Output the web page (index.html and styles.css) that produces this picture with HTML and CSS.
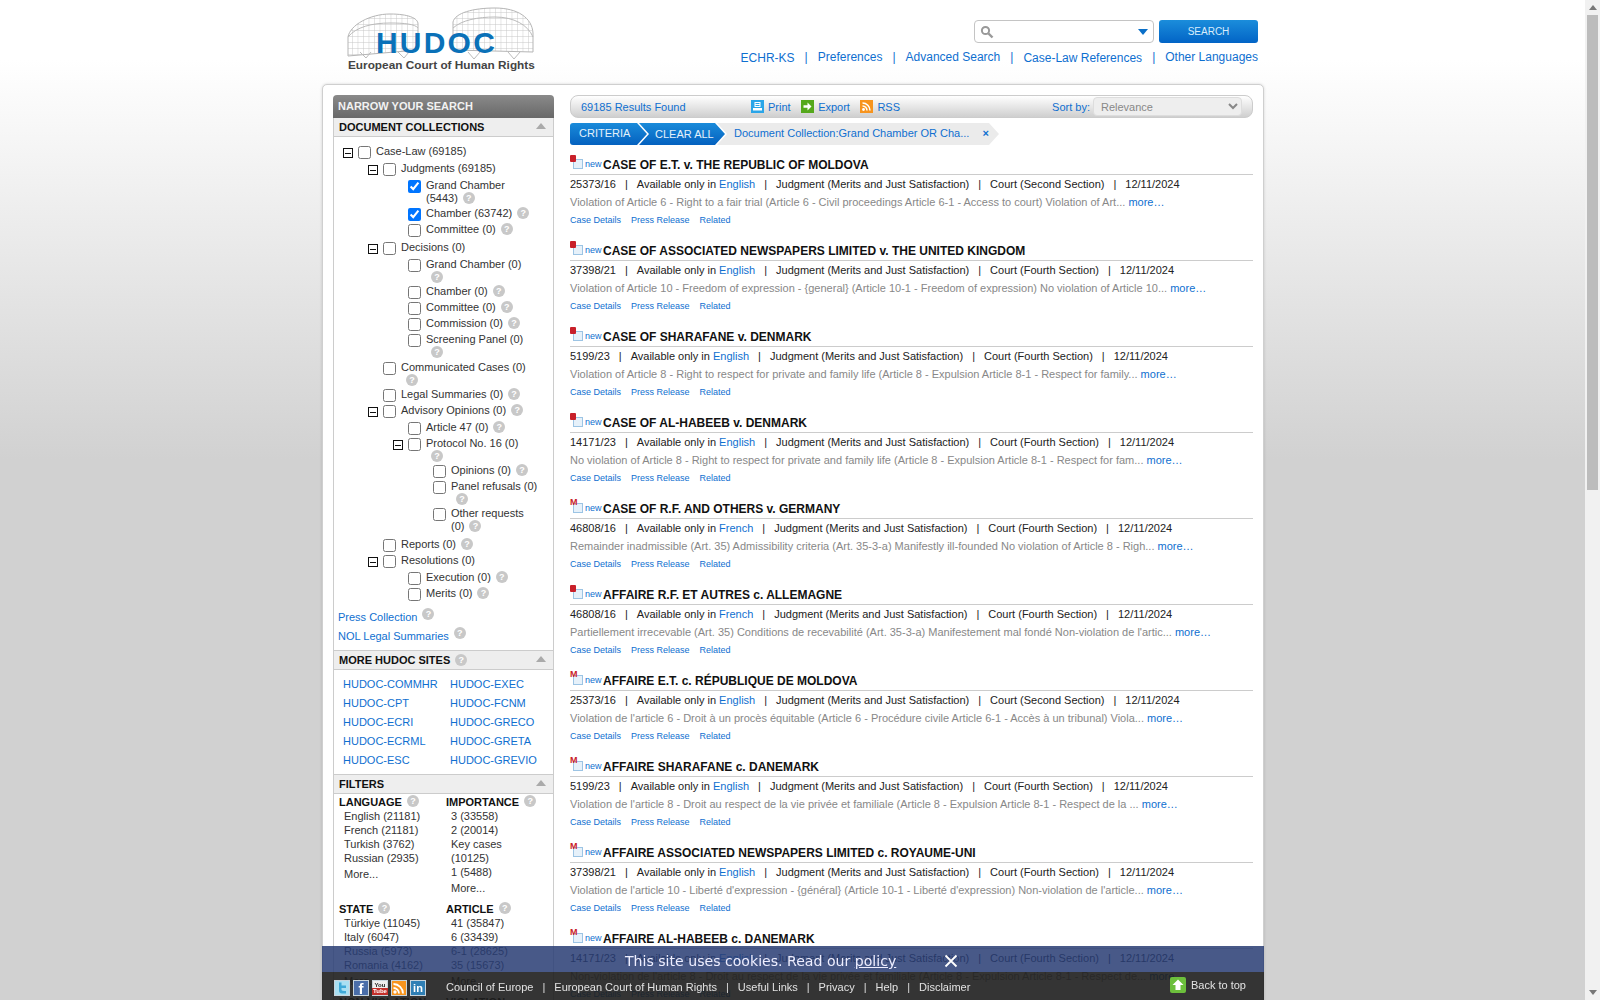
FILE: index.html
```html
<!DOCTYPE html>
<html lang="en">
<head>
    <meta charset="UTF-8">
    <meta name="viewport" content="width=device-width, initial-scale=1.0">
    <title>HUDOC - European Court of Human Rights</title>
    <link rel="stylesheet" href="styles.css">
</head>
<body>
    <div class="page">
        <header class="top">
            <svg class="logo" width="205" height="76" viewBox="340 0 205 76">
                <defs>
                    <pattern id="grid" x="0" y="0" width="5.5" height="6" patternUnits="userSpaceOnUse">
                        <path d="M0 0V6M0 0H5.5" fill="none" stroke="#c4c4c4" stroke-width="0.9"/>
                    </pattern>
                </defs>
                <path d="M348 37C350 25 370 14 390 14C408 14 418 18 418 24V50L348 56Z" fill="url(#grid)" stroke="#b5b5b5"/>
                <path d="M348 37C356 27 372 23 390 23C404 23 415 24 418 28" fill="none" stroke="#bbb"/>
                <path d="M453 22C455 13 473 8 495 8C518 8 532 18 533 33V52L453 50Z" fill="url(#grid)" stroke="#b5b5b5"/>
                <path d="M453 28C462 20 478 17 495 17C514 17 528 25 533 37" fill="none" stroke="#bbb"/>
                <path d="M360 52L366 58L371 52M398 52L404 58L409 52M468 52L474 59L480 52M508 52L514 59L520 52" fill="none" stroke="#bbb"/>
                <text x="376" y="53" class="logo-name">HUDOC</text>
                <text x="348" y="69" class="logo-sub">European Court of Human Rights</text>
            </svg>
            <div class="top-right">
                <div class="search-row">
                    <div class="search-box">
                        <svg width="14" height="14" viewBox="0 0 14 14"><circle cx="5.5" cy="5.5" r="3.6" fill="none" stroke="#999" stroke-width="2"/><path d="M8.5 8.5L12.5 12.5" stroke="#999" stroke-width="2.4"/></svg>
                        <input type="text" class="search-input">
                        <span class="search-arrow"></span>
                    </div>
                    <button class="search-btn">SEARCH</button>
                </div>
                <nav class="top-links">
                    <a class="low">ECHR-KS</a><i>|</i>
                    <a>Preferences</a><i>|</i>
                    <a>Advanced Search</a><i>|</i>
                    <a class="low">Case-Law References</a><i>|</i>
                    <a>Other Languages</a>
                </nav>
            </div>
        </header>

        <main class="panel">
            <aside class="side">
                <h2 class="narrow">NARROW YOUR SEARCH</h2>
                <div class="side-box">
                    <h3 class="sec"><span>DOCUMENT COLLECTIONS</span><b class="tri"></b></h3>
                    <ul class="tree root">
                        <li>
                            <div class="row"><span class="exp"></span><input type="checkbox"><label>Case-Law (69185)</label></div>
                            <ul class="tree">
                                <li>
                                    <div class="row"><span class="exp"></span><input type="checkbox"><label>Judgments (69185)</label></div>
                                    <ul class="tree roomy">
                                        <li><div class="row two"><input type="checkbox" checked><label>Grand Chamber<br>(5443)<span class="help">?</span></label></div></li>
                                        <li><div class="row"><input type="checkbox" checked><label>Chamber (63742)<span class="help">?</span></label></div></li>
                                        <li><div class="row"><input type="checkbox"><label>Committee (0)<span class="help">?</span></label></div></li>
                                    </ul>
                                </li>
                                <li>
                                    <div class="row"><span class="exp"></span><input type="checkbox"><label>Decisions (0)</label></div>
                                    <ul class="tree">
                                        <li><div class="row solo"><input type="checkbox"><label>Grand Chamber (0)<br><span class="help">?</span></label></div></li>
                                        <li><div class="row"><input type="checkbox"><label>Chamber (0)<span class="help">?</span></label></div></li>
                                        <li><div class="row"><input type="checkbox"><label>Committee (0)<span class="help">?</span></label></div></li>
                                        <li><div class="row"><input type="checkbox"><label>Commission (0)<span class="help">?</span></label></div></li>
                                        <li><div class="row solo"><input type="checkbox"><label>Screening Panel (0)<br><span class="help">?</span></label></div></li>
                                    </ul>
                                </li>
                                <li><div class="row solo"><input type="checkbox"><label>Communicated Cases (0)<br><span class="help">?</span></label></div></li>
                                <li><div class="row"><input type="checkbox"><label>Legal Summaries (0)<span class="help">?</span></label></div></li>
                                <li>
                                    <div class="row"><span class="exp"></span><input type="checkbox"><label>Advisory Opinions (0)<span class="help">?</span></label></div>
                                    <ul class="tree">
                                        <li><div class="row"><input type="checkbox"><label>Article 47 (0)<span class="help">?</span></label></div></li>
                                        <li>
                                            <div class="row tight"><span class="exp"></span><input type="checkbox"><label>Protocol No. 16 (0)<br><span class="help">?</span></label></div>
                                            <ul class="tree">
                                                <li><div class="row"><input type="checkbox"><label>Opinions (0)<span class="help">?</span></label></div></li>
                                                <li><div class="row solo"><input type="checkbox"><label>Panel refusals (0)<br><span class="help">?</span></label></div></li>
                                                <li><div class="row"><input type="checkbox"><label>Other requests<br>(0)<span class="help">?</span></label></div></li>
                                            </ul>
                                        </li>
                                    </ul>
                                </li>
                                <li><div class="row"><input type="checkbox"><label>Reports (0)<span class="help">?</span></label></div></li>
                                <li>
                                    <div class="row"><span class="exp"></span><input type="checkbox"><label>Resolutions (0)</label></div>
                                    <ul class="tree">
                                        <li><div class="row"><input type="checkbox"><label>Execution (0)<span class="help">?</span></label></div></li>
                                        <li><div class="row"><input type="checkbox"><label>Merits (0)<span class="help">?</span></label></div></li>
                                    </ul>
                                </li>
                            </ul>
                        </li>
                    </ul>
                    <div class="side-links">
                        <a>Press Collection<span class="help">?</span></a>
                        <a>NOL Legal Summaries<span class="help">?</span></a>
                    </div>

                    <h3 class="sec"><span>MORE HUDOC SITES<span class="help">?</span></span><b class="tri"></b></h3>
                    <div class="sites">
                        <a>HUDOC-COMMHR</a><a>HUDOC-EXEC</a>
                        <a>HUDOC-CPT</a><a>HUDOC-FCNM</a>
                        <a>HUDOC-ECRI</a><a>HUDOC-GRECO</a>
                        <a>HUDOC-ECRML</a><a>HUDOC-GRETA</a>
                        <a>HUDOC-ESC</a><a>HUDOC-GREVIO</a>
                    </div>

                    <h3 class="sec"><span>FILTERS</span><b class="tri"></b></h3>
                    <div class="filters">
                        <div class="filter">
                            <h4>LANGUAGE<span class="help">?</span></h4>
                            <p>English (21181)</p>
                            <p>French (21181)</p>
                            <p>Turkish (3762)</p>
                            <p>Russian (2935)</p>
                            <p class="more-f">More...</p>
                        </div>
                        <div class="filter">
                            <h4>IMPORTANCE<span class="help">?</span></h4>
                            <p>3 (33558)</p>
                            <p>2 (20014)</p>
                            <p>Key cases</p>
                            <p>(10125)</p>
                            <p>1 (5488)</p>
                            <p class="more-f">More...</p>
                        </div>
                        <div class="filter">
                            <h4>STATE<span class="help">?</span></h4>
                            <p>Türkiye (11045)</p>
                            <p>Italy (6047)</p>
                            <p>Russia (5973)</p>
                            <p>Romania (4162)</p>
                            <p class="more-f">More...</p>
                        </div>
                        <div class="filter">
                            <h4>ARTICLE<span class="help">?</span></h4>
                            <p>41 (35847)</p>
                            <p>6 (33439)</p>
                            <p>6-1 (28625)</p>
                            <p>35 (15673)</p>
                            <p class="more-f">More...</p>
                        </div>
                        <div class="filter">
                            <h4>NON-VIOLATION</h4>
                        </div>
                        <div class="filter">
                            <h4>VIOLATION</h4>
                        </div>
                    </div>
                </div>
            </aside>

            <section class="results">
                <div class="toolbar">
                    <span class="found">69185 Results Found</span>
                    <a class="tool print">
                        <svg width="13" height="13" viewBox="0 0 13 13"><rect width="13" height="13" fill="#2aa5e8"/><path d="M3.5 2H9.5V7H3.5ZM2 8H11V10.5H2Z" fill="#fff"/><path d="M4.5 3.5H8.5M4.5 5.5H8.5" stroke="#2aa5e8"/></svg>
                        Print
                    </a>
                    <a class="tool export">
                        <svg width="13" height="13" viewBox="0 0 13 13"><rect width="13" height="13" fill="#55a81c"/><path d="M2.5 5.2H6.5V2.5L10.5 6.5L6.5 10.5V7.8H2.5Z" fill="#fff"/></svg>
                        Export
                    </a>
                    <a class="tool rss">
                        <svg width="13" height="13" viewBox="0 0 13 13"><rect width="13" height="13" fill="#f7941e"/><circle cx="3.5" cy="9.5" r="1.4" fill="#fff"/><path d="M2.5 6A4.5 4.5 0 0 1 7 10.5M2.5 3A7.5 7.5 0 0 1 10 10.5" fill="none" stroke="#fff" stroke-width="1.5"/></svg>
                        RSS
                    </a>
                    <span class="sort">Sort by:</span>
                    <select class="sort-select"><option>Relevance</option></select>
                </div>

                <div class="criteria">
                    <span class="chip chip-first">CRITERIA</span>
                    <span class="chip chip-clear">CLEAR ALL</span>
                    <span class="chip chip-doc"><a>Document Collection:Grand Chamber OR Cha...</a><b>×</b></span>
                </div>

                <article class="result">
                    <h3 class="r-title"><span class="doc"><span class="flag"></span></span><em>new</em>CASE OF E.T. v. THE REPUBLIC OF MOLDOVA</h3>
                    <p class="r-meta">25373/16<i>|</i>Available only in <a>English</a><i>|</i>Judgment (Merits and Just Satisfaction)<i>|</i>Court (Second Section)<i>|</i>12/11/2024</p>
                    <p class="r-desc">Violation of Article 6 - Right to a fair trial (Article 6 - Civil proceedings Article 6-1 - Access to court) Violation of Art... <a>more…</a></p>
                    <p class="r-links"><a>Case Details</a><a>Press Release</a><a>Related</a></p>
                </article>
                <article class="result">
                    <h3 class="r-title"><span class="doc"><span class="flag"></span></span><em>new</em>CASE OF ASSOCIATED NEWSPAPERS LIMITED v. THE UNITED KINGDOM</h3>
                    <p class="r-meta">37398/21<i>|</i>Available only in <a>English</a><i>|</i>Judgment (Merits and Just Satisfaction)<i>|</i>Court (Fourth Section)<i>|</i>12/11/2024</p>
                    <p class="r-desc">Violation of Article 10 - Freedom of expression - {general} (Article 10-1 - Freedom of expression) No violation of Article 10... <a>more…</a></p>
                    <p class="r-links"><a>Case Details</a><a>Press Release</a><a>Related</a></p>
                </article>
                <article class="result">
                    <h3 class="r-title"><span class="doc"><span class="flag"></span></span><em>new</em>CASE OF SHARAFANE v. DENMARK</h3>
                    <p class="r-meta">5199/23<i>|</i>Available only in <a>English</a><i>|</i>Judgment (Merits and Just Satisfaction)<i>|</i>Court (Fourth Section)<i>|</i>12/11/2024</p>
                    <p class="r-desc">Violation of Article 8 - Right to respect for private and family life (Article 8 - Expulsion Article 8-1 - Respect for family... <a>more…</a></p>
                    <p class="r-links"><a>Case Details</a><a>Press Release</a><a>Related</a></p>
                </article>
                <article class="result">
                    <h3 class="r-title"><span class="doc"><span class="flag"></span></span><em>new</em>CASE OF AL-HABEEB v. DENMARK</h3>
                    <p class="r-meta">14171/23<i>|</i>Available only in <a>English</a><i>|</i>Judgment (Merits and Just Satisfaction)<i>|</i>Court (Fourth Section)<i>|</i>12/11/2024</p>
                    <p class="r-desc">No violation of Article 8 - Right to respect for private and family life (Article 8 - Expulsion Article 8-1 - Respect for fam... <a>more…</a></p>
                    <p class="r-links"><a>Case Details</a><a>Press Release</a><a>Related</a></p>
                </article>
                <article class="result">
                    <h3 class="r-title"><span class="doc"><span class="flag-m">M</span></span><em>new</em>CASE OF R.F. AND OTHERS v. GERMANY</h3>
                    <p class="r-meta">46808/16<i>|</i>Available only in <a>French</a><i>|</i>Judgment (Merits and Just Satisfaction)<i>|</i>Court (Fourth Section)<i>|</i>12/11/2024</p>
                    <p class="r-desc">Remainder inadmissible (Art. 35) Admissibility criteria (Art. 35-3-a) Manifestly ill-founded No violation of Article 8 - Righ... <a>more…</a></p>
                    <p class="r-links"><a>Case Details</a><a>Press Release</a><a>Related</a></p>
                </article>
                <article class="result">
                    <h3 class="r-title"><span class="doc"><span class="flag"></span></span><em>new</em>AFFAIRE R.F. ET AUTRES c. ALLEMAGNE</h3>
                    <p class="r-meta">46808/16<i>|</i>Available only in <a>French</a><i>|</i>Judgment (Merits and Just Satisfaction)<i>|</i>Court (Fourth Section)<i>|</i>12/11/2024</p>
                    <p class="r-desc">Partiellement irrecevable (Art. 35) Conditions de recevabilité (Art. 35-3-a) Manifestement mal fondé Non-violation de l'artic... <a>more…</a></p>
                    <p class="r-links"><a>Case Details</a><a>Press Release</a><a>Related</a></p>
                </article>
                <article class="result">
                    <h3 class="r-title"><span class="doc"><span class="flag-m">M</span></span><em>new</em>AFFAIRE E.T. c. RÉPUBLIQUE DE MOLDOVA</h3>
                    <p class="r-meta">25373/16<i>|</i>Available only in <a>English</a><i>|</i>Judgment (Merits and Just Satisfaction)<i>|</i>Court (Second Section)<i>|</i>12/11/2024</p>
                    <p class="r-desc">Violation de l'article 6 - Droit à un procès équitable (Article 6 - Procédure civile Article 6-1 - Accès à un tribunal) Viola... <a>more…</a></p>
                    <p class="r-links"><a>Case Details</a><a>Press Release</a><a>Related</a></p>
                </article>
                <article class="result">
                    <h3 class="r-title"><span class="doc"><span class="flag-m">M</span></span><em>new</em>AFFAIRE SHARAFANE c. DANEMARK</h3>
                    <p class="r-meta">5199/23<i>|</i>Available only in <a>English</a><i>|</i>Judgment (Merits and Just Satisfaction)<i>|</i>Court (Fourth Section)<i>|</i>12/11/2024</p>
                    <p class="r-desc">Violation de l'article 8 - Droit au respect de la vie privée et familiale (Article 8 - Expulsion Article 8-1 - Respect de la ... <a>more…</a></p>
                    <p class="r-links"><a>Case Details</a><a>Press Release</a><a>Related</a></p>
                </article>
                <article class="result">
                    <h3 class="r-title"><span class="doc"><span class="flag-m">M</span></span><em>new</em>AFFAIRE ASSOCIATED NEWSPAPERS LIMITED c. ROYAUME-UNI</h3>
                    <p class="r-meta">37398/21<i>|</i>Available only in <a>English</a><i>|</i>Judgment (Merits and Just Satisfaction)<i>|</i>Court (Fourth Section)<i>|</i>12/11/2024</p>
                    <p class="r-desc">Violation de l'article 10 - Liberté d'expression - {général} (Article 10-1 - Liberté d'expression) Non-violation de l'article... <a>more…</a></p>
                    <p class="r-links"><a>Case Details</a><a>Press Release</a><a>Related</a></p>
                </article>
                <article class="result">
                    <h3 class="r-title"><span class="doc"><span class="flag-m">M</span></span><em>new</em>AFFAIRE AL-HABEEB c. DANEMARK</h3>
                    <p class="r-meta">14171/23<i>|</i>Available only in <a>English</a><i>|</i>Judgment (Merits and Just Satisfaction)<i>|</i>Court (Fourth Section)<i>|</i>12/11/2024</p>
                    <p class="r-desc">Non-violation de l'article 8 - Droit au respect de la vie privée et familiale (Article 8 - Expulsion Article 8-1 - Respect de... <a>more…</a></p>
                    <p class="r-links"><a>Case Details</a><a>Press Release</a><a>Related</a></p>
                </article>
            </section>
        </main>
    </div>

    <div class="bottom">
        <div class="cookie">
            <span>This site uses cookies. Read our <u>policy</u></span>
            <svg width="14" height="14" viewBox="0 0 14 14"><path d="M1.5 1.5L12.5 12.5M12.5 1.5L1.5 12.5" stroke="#fff" stroke-width="1.8"/></svg>
        </div>
        <footer class="foot">
            <div class="social">
                <span class="soc soc-tw"><svg width="14" height="14" viewBox="0 0 14 14"><path d="M4 1.5H6.5V4.5H11V7H6.5V8.5C6.5 9.8 7.5 10 11 10V12.5H7C5 12.5 4 11.5 4 9.5Z" fill="#3fa9d8"/></svg></span>
                <span class="soc soc-fb">f</span>
                <span class="soc soc-yt"><b>You</b><b class="tube">Tube</b></span>
                <span class="soc soc-rss"><svg width="14" height="14" viewBox="0 0 14 14"><circle cx="3" cy="11" r="1.7" fill="#fff"/><path d="M1.5 7A5.5 5.5 0 0 1 7 12.5M1.5 3A9.5 9.5 0 0 1 11 12.5" fill="none" stroke="#fff" stroke-width="1.8"/></svg></span>
                <span class="soc soc-in">in</span>
            </div>
            <nav class="foot-links">
                <a>Council of Europe</a><i>|</i>
                <a>European Court of Human Rights</a><i>|</i>
                <a>Useful Links</a><i>|</i>
                <a>Privacy</a><i>|</i>
                <a>Help</a><i>|</i>
                <a>Disclaimer</a>
            </nav>
            <a class="back">
                <svg width="16" height="16" viewBox="0 0 16 16"><rect width="16" height="16" rx="2" fill="#6cbf3c"/><path d="M8 2.5L13.5 8H10.5V13H5.5V8H2.5Z" fill="#fff"/></svg>
                Back to top
            </a>
        </footer>
    </div>

    <div class="scrollbar">
        <span class="sb-up"></span>
        <span class="sb-thumb"></span>
        <span class="sb-down"></span>
    </div>
</body>
</html>
```

FILE: styles.css
```css
html, body {
    margin: 0;
    padding: 0;
    height: 1000px;
    overflow: hidden;
}
body {
    font-family: "Liberation Sans", Arial, sans-serif;
    font-size: 11px;
    color: #222;
    background: linear-gradient(#fff 60px, #d1d1d1 460px);
}
a {
    color: #0f6fd0;
    text-decoration: none;
}
h2, h3, h4, p, ul {
    margin: 0;
    padding: 0;
}
.page {
    width: 942px;
    margin-left: 322px;
}

/* header */
.top {
    display: flex;
    justify-content: space-between;
    height: 84px;
    padding-right: 6px;
    box-sizing: border-box;
}
.logo {
    margin-left: 18px;
    flex: none;
}
.logo-name {
    font: bold 30px "Liberation Sans", Arial, sans-serif;
    letter-spacing: 2.2px;
    fill: #0a71b8;
}
.logo-sub {
    font: bold 11.8px "Liberation Sans", Arial, sans-serif;
    fill: #444;
}
.top-right {
    display: flex;
    flex-direction: column;
    align-items: flex-end;
    padding-top: 20px;
}
.search-row {
    display: flex;
    gap: 5px;
}
.search-box {
    display: flex;
    align-items: center;
    width: 180px;
    height: 23px;
    box-sizing: border-box;
    padding: 0 5px;
    background: #fff;
    border: 1px solid #c4c4c4;
    border-radius: 4px;
}
.search-input {
    flex: 1;
    min-width: 0;
    border: 0;
    outline: 0;
    background: none;
}
.search-arrow {
    width: 0;
    height: 0;
    border-left: 5px solid transparent;
    border-right: 5px solid transparent;
    border-top: 6px solid #0a6fc8;
}
.search-btn {
    width: 99px;
    height: 23px;
    padding: 0;
    border: 0;
    border-radius: 3px;
    color: #d8ecfb;
    font: 10px "Liberation Sans", Arial, sans-serif;
    background: linear-gradient(#1b8ddb, #0264c6);
}
.top-links {
    display: flex;
    align-items: flex-start;
    margin-top: 7px;
    font-size: 12px;
    line-height: 14px;
}
.top-links i {
    font-style: normal;
    color: #0f6fd0;
    margin: 0 10px;
}
.top-links .low {
    margin-top: 1px;
}

/* main panel */
.panel {
    display: flex;
    gap: 16px;
    padding: 10px 10px 0;
    height: 1200px;
    box-sizing: border-box;
    background: #fff;
    border: 1px solid #cfcfcf;
    border-radius: 5px;
    box-shadow: 0 0 3px rgba(0, 0, 0, 0.15);
}

/* left column */
.side {
    width: 221px;
    flex: none;
}
.narrow {
    height: 23px;
    padding-left: 5px;
    color: #f2f2f2;
    font-size: 11px;
    line-height: 23px;
    border-radius: 4px 4px 0 0;
    background: linear-gradient(#8a8a8a, #686868);
}
.side-box {
    border: 1px solid #ccc;
    border-top: 0;
}
.sec {
    display: flex;
    justify-content: space-between;
    align-items: center;
    height: 18px;
    padding: 0 7px 0 5px;
    color: #111;
    font-size: 11px;
    background: #eee;
    border-top: 1px solid #ccc;
    border-bottom: 1px solid #ccc;
}
.tri {
    width: 0;
    height: 0;
    margin-bottom: 2px;
    border-left: 5px solid transparent;
    border-right: 5px solid transparent;
    border-bottom: 6px solid #aaa;
}
.sec:first-child {
    border-top: 0;
}
.tree {
    list-style: none;
    padding: 1px 0 1px 25px;
}
.tree.roomy {
    padding-bottom: 2px;
}
.root {
    margin-top: 7px;
    padding-left: 24px;
}
.row {
    display: flex;
    align-items: flex-start;
    line-height: 13px;
    margin-bottom: 3px;
    color: #333;
    font-size: 11px;
    white-space: nowrap;
}
.row.two {
    margin-bottom: 2px;
}
.row.solo {
    margin-bottom: 1px;
}
.row.tight {
    margin-bottom: 0;
}
.row input {
    width: 13px;
    height: 13px;
    margin: 1px 5px -1px 0;
    flex: none;
}
.exp {
    flex: none;
    box-sizing: border-box;
    width: 10px;
    height: 10px;
    margin: 3px 5px 0 -15px;
    border: 1px solid #111;
    background: linear-gradient(#111, #111) center / 6px 1px no-repeat;
}
.help {
    display: inline-block;
    width: 12px;
    height: 12px;
    margin-left: 5px;
    border-radius: 50%;
    color: #fff;
    font: bold 9px/12px "Liberation Sans", Arial, sans-serif;
    text-align: center;
    vertical-align: top;
    background: #c8c8c8;
}
.side-links {
    display: flex;
    flex-direction: column;
    margin-top: 2px;
    padding: 0 4px 4px;
    line-height: 19px;
}
.sites {
    display: grid;
    grid-template-columns: 107px 1fr;
    padding: 5px 9px 4px;
    line-height: 19px;
}
.filters {
    display: grid;
    grid-template-columns: 107px 1fr;
    padding: 1px 5px 0;
    line-height: 14px;
    color: #333;
}
.filter {
    margin-bottom: 7px;
}
.filter h4 {
    color: #111;
    font-size: 11px;
    white-space: nowrap;
}
.filter p {
    padding-left: 5px;
}
.filter .more-f {
    margin-top: 2px;
}

/* results */
.results {
    flex: 1;
    min-width: 0;
}
.toolbar {
    display: flex;
    align-items: center;
    height: 23px;
    box-sizing: border-box;
    padding: 0 10px;
    color: #0f6fd0;
    border: 1px solid #ccc;
    border-radius: 8px;
    background: linear-gradient(#fff, #cfcfcf);
}
.found {
    width: 170px;
}
.tool {
    display: flex;
    align-items: center;
    gap: 4px;
    margin-right: 10.5px;
}
.sort {
    margin-left: auto;
    margin-right: 3px;
}
.sort-select {
    width: 149px;
    height: 19px;
    padding-left: 3px;
    color: #888;
    font: 11px "Liberation Sans", Arial, sans-serif;
    border: 1px solid #ddd;
    border-radius: 4px;
    background: #eee;
}
.criteria {
    display: flex;
    height: 22px;
    margin-top: 5px;
    line-height: 20px;
}
.chip {
    display: block;
    height: 22px;
    box-sizing: border-box;
    white-space: nowrap;
}
.chip-first {
    width: 77px;
    padding-left: 9px;
    color: #e4f1fb;
    background: linear-gradient(#1a8bda, #0461bf);
    clip-path: polygon(0 0, 67px 0, 100% 50%, 67px 100%, 0 100%);
    border-radius: 3px 0 0 3px;
}
.chip-clear {
    width: 86px;
    margin-left: -8px;
    padding: 1px 0 0 16px;
    color: #e4f1fb;
    background: linear-gradient(#1a8bda, #0461bf);
    clip-path: polygon(0 0, 76px 0, 100% 50%, 76px 100%, 0 100%, 10px 50%);
}
.chip-doc {
    display: flex;
    justify-content: space-between;
    width: 282px;
    margin-left: -8px;
    padding: 0 10px 0 17px;
    background: #ebebeb;
    clip-path: polygon(0 0, 272px 0, 100% 50%, 272px 100%, 0 100%, 10px 50%);
}
.chip-doc b {
    color: #0f6fd0;
    font-size: 11px;
}
.result {
    height: 86px;
}
.criteria + .result {
    margin-top: 10px;
}
.r-title {
    display: flex;
    align-items: center;
    height: 20px;
    box-sizing: border-box;
    color: #111;
    font-size: 12px;
    white-space: nowrap;
    border-bottom: 1px solid #ccc;
}
.r-title em {
    width: 18px;
    flex: none;
    color: #0f6fd0;
    font: 9px "Liberation Sans", Arial, sans-serif;
    margin-top: -2px;
}
.doc {
    display: block;
    position: relative;
    flex: none;
    width: 10px;
    height: 10px;
    margin: -1px 2px 0 3px;
    border: 1px solid #9cc4e4;
    box-sizing: border-box;
    background: #e6f1fa;
}
.flag {
    position: absolute;
    left: -4px;
    top: -5px;
    width: 6px;
    height: 7px;
    background: #c8202a;
    border-radius: 1px;
}
.flag-m {
    position: absolute;
    left: -4px;
    top: -6px;
    color: #c8202a;
    font: bold 9px/9px "Liberation Sans", Arial, sans-serif;
}
.r-meta {
    height: 18px;
    line-height: 18px;
    white-space: nowrap;
}
.r-meta i {
    font-style: normal;
    margin: 0 9px;
}
.r-desc {
    height: 18px;
    line-height: 18px;
    color: #888;
    white-space: nowrap;
}
.r-links {
    display: flex;
    gap: 10px;
    height: 18px;
    line-height: 18px;
    font-size: 9px;
}

/* fixed bottom bars */
.bottom {
    position: fixed;
    left: 322px;
    bottom: 0;
    width: 942px;
}
.cookie {
    display: flex;
    align-items: center;
    gap: 48px;
    height: 26px;
    padding: 4px 0 0 303px;
    box-sizing: border-box;
    color: #eef;
    font: 14.1px "DejaVu Sans", Verdana, sans-serif;
    background: rgba(40, 60, 115, 0.85);
}
.foot {
    display: flex;
    align-items: center;
    height: 28px;
    padding: 0 18px 0 12px;
    color: #ddd;
    background: rgba(30, 30, 30, 0.9);
}
.social {
    display: flex;
    gap: 3px;
    margin: 4px 20px 0 0;
}
.soc {
    display: flex;
    flex-direction: column;
    align-items: center;
    justify-content: center;
    box-sizing: border-box;
    width: 16px;
    height: 16px;
    font-family: "Liberation Sans", Arial, sans-serif;
    font-weight: bold;
    border: 1px solid #c8d4dc;
}
.soc-tw {
    background: #a9dff2;
}
.soc-fb {
    color: #fff;
    font-size: 15px;
    background: #4a6ea9;
}
.soc-yt {
    color: #222;
    font-size: 6px;
    line-height: 6.5px;
    background: #eee;
}
.soc-yt .tube {
    padding: 0 1px;
    color: #fff;
    background: #c4302b;
}
.soc-rss {
    background: #f7941e;
}
.soc-in {
    color: #fff;
    font-size: 11px;
    background: #2f7fb5;
}
.foot-links {
    display: flex;
    align-items: center;
    margin-top: 2px;
}
.foot-links a, .back {
    color: #e2e2e2;
}
.foot-links i {
    font-style: normal;
    margin: 0 9px;
}
.back {
    display: flex;
    align-items: center;
    gap: 5px;
    margin-left: auto;
    margin-top: -3px;
}

/* scrollbar drawn by hand, the page itself is clipped */
.scrollbar {
    position: fixed;
    top: 0;
    right: 0;
    bottom: 0;
    width: 15px;
    display: flex;
    flex-direction: column;
    align-items: center;
    background: #f1f1f1;
}
.sb-up, .sb-down {
    width: 0;
    height: 0;
    border-left: 4px solid transparent;
    border-right: 4px solid transparent;
}
.sb-up {
    margin-top: 5px;
    border-bottom: 5px solid #777;
}
.sb-thumb {
    width: 11px;
    height: 475px;
    margin-top: 5px;
    background: #bcbcbc;
}
.sb-down {
    margin-top: auto;
    margin-bottom: 5px;
    border-top: 5px solid #777;
}
```
